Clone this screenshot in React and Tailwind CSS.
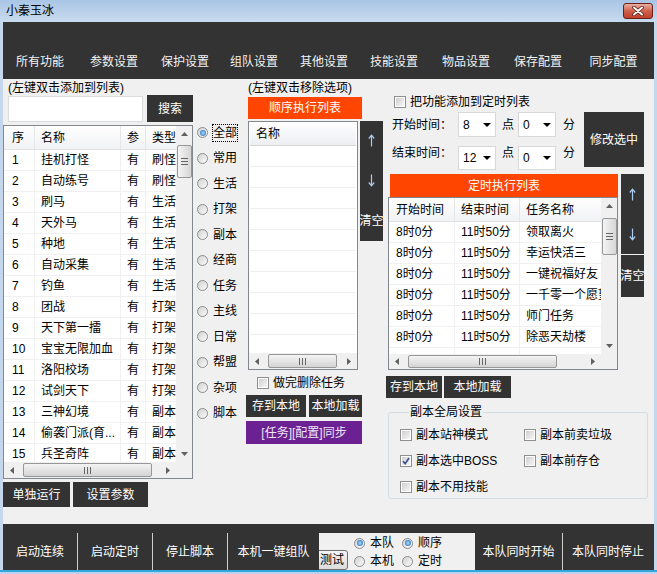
import React from 'react'

const funcs = [
  ['1', '挂机打怪', '刷怪'],
  ['2', '自动练号', '刷怪'],
  ['3', '刷马', '生活'],
  ['4', '天外马', '生活'],
  ['5', '种地', '生活'],
  ['6', '自动采集', '生活'],
  ['7', '钓鱼', '生活'],
  ['8', '团战', '打架'],
  ['9', '天下第一擂', '打架'],
  ['10', '宝宝无限加血', '打架'],
  ['11', '洛阳校场', '打架'],
  ['12', '试剑天下', '打架'],
  ['13', '三神幻境', '副本'],
  ['14', '偷袭门派(育...', '副本'],
  ['15', '兵圣奇阵', '副本'],
]

const timed = ['领取离火', '幸运快活三', '一键祝福好友', '一千零一个愿望', '师门任务', '除恶天劫楼', '']

const menus = [
  ['所有功能', 'w-[74px]'],
  ['参数设置', 'w-[74px]'],
  ['保护设置', 'w-[68px]'],
  ['组队设置', 'w-[70px]'],
  ['其他设置', 'w-[70px]'],
  ['技能设置', 'w-[70px]'],
  ['物品设置', 'w-[74px]'],
  ['保存配置', 'w-[70px]'],
  ['同步配置', 'w-[81px]'],
]

const kinds = ['全部', '常用', '生活', '打架', '副本', '经商', '任务', '主线', '日常', '帮盟', '杂项', '脚本']

function Tri({ dir }) {
  if (dir === 'up') return <svg width="7" height="4" viewBox="0 0 7 4"><polygon points="0,4 3.5,0 7,4" fill="currentColor" /></svg>
  if (dir === 'down') return <svg width="7" height="4" viewBox="0 0 7 4"><polygon points="0,0 7,0 3.5,4" fill="currentColor" /></svg>
  if (dir === 'left') return <svg width="4" height="7" viewBox="0 0 4 7"><polygon points="4,0 4,7 0,3.5" fill="currentColor" /></svg>
  return <svg width="4" height="7" viewBox="0 0 4 7"><polygon points="0,0 4,3.5 0,7" fill="currentColor" /></svg>
}

function MoveArrow({ down }) {
  return (
    <svg width="7" height="13" viewBox="0 0 7 13" className={down ? 'rotate-180' : ''}>
      <path d="M3.5 1.5 V12.5 M0.8 4.5 L3.5 1.2 L6.2 4.5" fill="none" stroke="#a9cdf0" strokeWidth="1.2" />
    </svg>
  )
}

function VScroll({ thumb }) {
  return (
    <div className="w-[16px] flex flex-col bg-[#f0f0f0]">
      <div className="h-[16px] flex items-center justify-center text-[#606060]"><Tri dir="up" /></div>
      <div className={`mx-auto w-[15px] ${thumb} rounded-[2px] border border-[#979797] bg-linear-to-r from-[#f4f4f4] to-[#d6d6d6] flex flex-col items-center justify-center gap-[2px]`}>
        <span className="w-[7px] h-px bg-[#666]" />
        <span className="w-[7px] h-px bg-[#666]" />
        <span className="w-[7px] h-px bg-[#666]" />
      </div>
      <div className="flex-1" />
      <div className="h-[16px] flex items-center justify-center text-[#606060]"><Tri dir="down" /></div>
    </div>
  )
}

function HScroll({ thumb, className }) {
  return (
    <div className={`flex bg-[#f0f0f0] ${className}`}>
      <div className="w-[16px] flex items-center justify-center text-[#606060]"><Tri dir="left" /></div>
      <div className={`ml-[3px] ${thumb} my-px rounded-[2px] border border-[#979797] bg-linear-to-b from-[#f4f4f4] to-[#d4d4d4] flex items-center justify-center gap-[2px]`}>
        <span className="w-px h-[7px] bg-[#666]" />
        <span className="w-px h-[7px] bg-[#666]" />
        <span className="w-px h-[7px] bg-[#666]" />
      </div>
      <div className="flex-1" />
      <div className="w-[16px] flex items-center justify-center text-[#606060]"><Tri dir="right" /></div>
    </div>
  )
}

function Radio({ checked, label, focus }) {
  return (
    <div className="flex items-center">
      <span className="w-[11px] h-[11px] rounded-full border border-[#8c8c8c] bg-linear-to-br from-[#d2d2d2] to-[#fbfbfb] flex items-center justify-center shrink-0">
        {checked && <span className="w-[6px] h-[6px] rounded-full bg-radial from-[#a6e0ff] to-[#0f5fae]" />}
      </span>
      {focus ? (
        <span className="ml-[5px] leading-[16px] outline-1 outline-dotted outline-black">{label}</span>
      ) : (
        <span className="ml-[5px]">{label}</span>
      )}
    </div>
  )
}

function Check({ checked, label, className }) {
  return (
    <div className={`flex items-center ${className}`}>
      <span className="w-[12px] h-[12px] border border-[#8e8f8f] bg-white p-[1px] flex shrink-0">
        <span className="flex-1 bg-linear-to-br from-[#d0d0d0] to-[#f6f6f6] flex items-center justify-center">
          {checked && (
            <svg width="8" height="8" viewBox="0 0 8 8">
              <path d="M1 4.2 L3.2 6.6 L7 1" fill="none" stroke="#3b4f91" strokeWidth="1.6" />
            </svg>
          )}
        </span>
      </span>
      <span className="ml-[4px]">{label}</span>
    </div>
  )
}

function Drop({ value }) {
  return (
    <div className="w-[38px] h-full bg-white border border-[#d8d8d8] flex items-center pl-[4px] pr-[4px]">
      <span className="flex-1">{value}</span>
      <svg width="8" height="4" viewBox="0 0 8 4"><polygon points="0,0 8,0 4,4" fill="#000" /></svg>
    </div>
  )
}

function Dark({ className, children }) {
  return <div className={`bg-[#333333] text-white flex items-center justify-center ${className}`}>{children}</div>
}

export default function App() {
  return (
    <div className="w-[657px] h-[574px] flex flex-col overflow-hidden bg-[#c4d7ec] text-black text-[12px] leading-[14px] font-['Liberation_Sans','Noto_Sans_CJK_SC',sans-serif]">
      {/* title bar */}
      <div className="h-[22px] flex items-center justify-between bg-linear-to-b from-[#a9c5e5] to-[#c8dbef]">
        <span className="ml-[6px]">小秦玉冰</span>
        <div className="mr-[4px] w-[30px] h-[16px] rounded-[3px] border border-[#6b2118] bg-linear-to-b from-[#eab0a3] via-[#d0604a] to-[#c0402b] flex items-center justify-center">
          <svg width="12" height="10" viewBox="0 0 12 10">
            <path d="M2 1.5 L10 8.5 M10 1.5 L2 8.5" stroke="#5a1b12" strokeWidth="3.6" strokeLinecap="round" />
            <path d="M2 1.5 L10 8.5 M10 1.5 L2 8.5" stroke="#fff" strokeWidth="2" strokeLinecap="round" />
          </svg>
        </div>
      </div>

      <div className="flex-1 flex flex-col px-[3px]">
        {/* menu */}
        <div className="h-[57px] bg-[#333333] flex items-end pb-[9px]">
          {menus.map(([m, w]) => (
            <div key={m} className={`${w} text-center leading-[16px] text-[#f2f2f2]`}>{m}</div>
          ))}
        </div>

        {/* content */}
        <div className="h-[445px] bg-[#f0f0f0] flex items-start">
          {/* column A */}
          <div className="w-[190px] flex flex-col">
            <div className="mt-[2px] h-[14px] pl-[5px]">(左键双击添加到列表)</div>
            <div className="h-[27px] flex items-start">
              <div className="ml-[5px] mt-px w-[135px] h-[26px] bg-white border border-[#dcdcdc]" />
              <Dark className="ml-[4px] w-[46px] h-[27px]">搜索</Dark>
            </div>
            <div className="mt-[3px] h-[354px] w-[190px] border border-[#828790] bg-white flex flex-col">
              <div className="flex h-[336px]">
                <div className="w-[172px] overflow-hidden flex flex-col">
                  <div className="h-[24px] shrink-0 flex bg-linear-to-b from-white to-[#f1f2f4] border-b border-[#e3e3e3]">
                    <div className="w-[31px] pl-[8px] flex items-center border-r border-[#e6e6e6]">序</div>
                    <div className="w-[86px] pl-[6px] flex items-center border-r border-[#e6e6e6]">名称</div>
                    <div className="w-[25px] pl-[6px] flex items-center border-r border-[#e6e6e6]">参</div>
                    <div className="w-[30px] pl-[6px] flex items-center whitespace-nowrap overflow-hidden">类型</div>
                  </div>
                  {funcs.map(([n, name, kind]) => (
                    <div key={n} className="h-[21px] shrink-0 flex border-b border-[#f0f0f0]">
                      <div className="w-[31px] pl-[8px] flex items-center border-r border-[#f0f0f0]">{n}</div>
                      <div className="w-[86px] pl-[6px] flex items-center border-r border-[#f0f0f0] whitespace-nowrap overflow-hidden">{name}</div>
                      <div className="w-[25px] pl-[6px] flex items-center border-r border-[#f0f0f0]">有</div>
                      <div className="w-[30px] pl-[6px] flex items-center whitespace-nowrap overflow-hidden">{kind}</div>
                    </div>
                  ))}
                </div>
                <VScroll thumb="mt-[3px] h-[33px]" />
              </div>
              <div className="flex h-[16px]">
                <HScroll className="w-[172px]" thumb="w-[129px]" />
                <div className="w-[16px] bg-[#f0f0f0]" />
              </div>
            </div>
            <div className="mt-[3px] h-[25px] flex">
              <Dark className="w-[67px]">单独运行</Dark>
              <Dark className="ml-[3px] w-[75px]">设置参数</Dark>
            </div>
          </div>

          {/* column B : radios */}
          <div className="ml-[4px] w-[49px] pt-[41px] flex flex-col">
            {kinds.map((k, i) => (
              <div key={k} className="h-[25.5px] flex items-center">
                <Radio label={k} checked={i === 0} focus={i === 0} />
              </div>
            ))}
          </div>

          {/* column C */}
          <div className="w-[137px] flex flex-col">
            <div className="mt-[2px] h-[14px] pl-[2px] whitespace-nowrap">(左键双击移除选项)</div>
            <div className="mt-[2px] ml-[2px] w-[114px] h-[22px] bg-[#ff4500] text-white flex items-center justify-center">顺序执行列表</div>
            <div className="mt-[2px] flex items-start">
              <div className="ml-[2px] w-[110px] h-[249px] border border-[#828790] bg-white flex flex-col">
                <div className="flex-1 overflow-hidden px-px flex flex-col">
                  <div className="h-[24px] shrink-0 pl-[6px] flex items-center bg-linear-to-b from-white to-[#eceef2] border-b border-[#d5d5d5]">名称</div>
                  {[0, 1, 2, 3, 4, 5, 6, 7, 8, 9].map((i) => (
                    <div key={i} className="h-[21px] shrink-0 border-b border-[#efefef]" />
                  ))}
                </div>
                <HScroll className="h-[16px]" thumb="w-[69px]" />
              </div>
              <div className="ml-[2px] w-[23px] h-[120px] bg-[#333333] text-white flex flex-col items-center justify-around">
                <MoveArrow />
                <MoveArrow down />
                <span className="whitespace-nowrap">清空</span>
              </div>
            </div>
            <Check className="mt-[6px] h-[14px] pl-[11px]" label="做完删除任务" />
            <div className="mt-[5px] h-[22px] flex">
              <Dark className="w-[60px]">存到本地</Dark>
              <Dark className="ml-[3px] w-[53px]">本地加载</Dark>
            </div>
            <div className="mt-[4px] w-[116px] h-[23px] bg-[#6b2192] text-[#f0e6f6] flex items-center justify-center">[任务][配置]同步</div>
          </div>

          {/* column D */}
          <div className="ml-[3px] w-[262px] flex flex-col">
            <Check className="mt-[16px] h-[14px] pl-[8px]" label="把功能添加到定时列表" />
            <div className="mt-[3px] flex items-start">
              <div className="flex flex-col">
                <div className="h-[25px] flex items-center">
                  <span className="ml-[6px] w-[60px]">开始时间：</span>
                  <div className="ml-[6px] h-full"><Drop value="8" /></div>
                  <span className="ml-[6px]">点</span>
                  <div className="ml-[4px] h-full"><Drop value="0" /></div>
                  <span className="ml-[7px]">分</span>
                </div>
                <div className="mt-[9px] h-[24px] flex items-start">
                  <span className="ml-[6px] w-[60px]">结束时间：</span>
                  <div className="ml-[6px] h-full"><Drop value="12" /></div>
                  <span className="ml-[6px]">点</span>
                  <div className="ml-[4px] h-full"><Drop value="0" /></div>
                  <span className="ml-[7px]">分</span>
                </div>
              </div>
              <Dark className="ml-[9px] w-[60px] h-[55px]">修改选中</Dark>
            </div>

            <div className="mt-[4px] flex items-start">
              <div className="w-[232px] flex flex-col">
                <div className="ml-[4px] w-[228px] h-[23px] bg-[#ff4500] text-white flex items-center justify-center">定时执行列表</div>
                <div className="ml-[2px] w-[230px] h-[173px] border border-[#828790] bg-white flex flex-col">
                  <div className="flex h-[156px]">
                    <div className="w-[212px] overflow-hidden flex flex-col">
                      <div className="h-[24px] shrink-0 flex bg-linear-to-b from-white to-[#f1f2f4] border-b border-[#e3e3e3]">
                        <div className="w-[66px] pl-[7px] flex items-center border-r border-[#e6e6e6]">开始时间</div>
                        <div className="w-[65px] pl-[6px] flex items-center border-r border-[#e6e6e6]">结束时间</div>
                        <div className="w-[81px] pl-[6px] flex items-center">任务名称</div>
                      </div>
                      {timed.map((t, i) => (
                        <div key={i} className="h-[21px] shrink-0 flex border-b border-[#f0f0f0]">
                          <div className="w-[66px] pl-[7px] flex items-center border-r border-[#f0f0f0]">{t ? '8时0分' : ''}</div>
                          <div className="w-[65px] pl-[6px] flex items-center border-r border-[#f0f0f0]">{t ? '11时50分' : ''}</div>
                          <div className="w-[81px] pl-[6px] flex items-center whitespace-nowrap overflow-hidden">{t}</div>
                        </div>
                      ))}
                    </div>
                    <VScroll thumb="mt-[4px] h-[37px]" />
                  </div>
                  <div className="flex h-[15px]">
                    <HScroll className="w-[212px]" thumb="w-[149px]" />
                    <div className="w-[16px] bg-[#f0f0f0]" />
                  </div>
                </div>
              </div>
              <div className="ml-[3px] w-[23px] flex flex-col">
                <div className="h-[80px] bg-[#333333] flex flex-col items-center justify-around">
                  <MoveArrow />
                  <MoveArrow down />
                </div>
                <Dark className="mt-px h-[42px] whitespace-nowrap">清空</Dark>
              </div>
            </div>

            <div className="mt-[6px] h-[22px] flex">
              <Dark className="w-[56px]">存到本地</Dark>
              <Dark className="ml-[2px] w-[67px]">本地加载</Dark>
            </div>

            <fieldset className="mt-[7px] ml-[2px] w-[260px] border border-[#d3dce3] rounded-[3px] pl-[11px] pt-[9px] pb-[4px]">
              <legend className="ml-[9px] px-px">副本全局设置</legend>
              <div className="grid grid-cols-[124px_1fr] gap-y-[12px]">
                <Check className="h-[14px]" label="副本站神模式" />
                <Check className="h-[14px]" label="副本前卖垃圾" />
                <Check className="h-[14px]" label="副本选中BOSS" checked />
                <Check className="h-[14px]" label="副本前存仓" />
                <Check className="h-[14px]" label="副本不用技能" />
              </div>
            </fieldset>
          </div>
        </div>

        {/* bottom bar */}
        <div className="h-[46px] bg-[#333333] pt-[9px] flex text-white">
          <div className="w-[74px] flex items-center justify-center">启动连续</div>
          <div className="w-px bg-[#d0d0d0]" />
          <div className="w-[74px] flex items-center justify-center">启动定时</div>
          <div className="w-px bg-[#d0d0d0]" />
          <div className="w-[74px] flex items-center justify-center">停止脚本</div>
          <div className="w-px bg-[#d0d0d0]" />
          <div className="w-[91px] flex items-center justify-center">本机一键组队</div>
          <div className="w-[156px] bg-[#f0f0f0] text-black flex overflow-hidden">
            <div className="self-end -ml-[3px] w-[32px] h-[20px] shrink-0 border border-[#707070] rounded-[3px] bg-linear-to-b from-[#f4f4f4] to-[#dcdcdc] flex items-center justify-center">测试</div>
            <div className="ml-[6px] pt-px flex flex-col">
              <div className="h-[19px] flex items-center">
                <div className="w-[48px]"><Radio label="本队" checked /></div>
                <Radio label="顺序" checked />
              </div>
              <div className="h-[19px] flex items-center">
                <div className="w-[48px]"><Radio label="本机" /></div>
                <Radio label="定时" />
              </div>
            </div>
          </div>
          <div className="w-[87px] flex items-center justify-center">本队同时开始</div>
          <div className="w-px bg-[#d0d0d0]" />
          <div className="w-[90px] flex items-center justify-center">本队同时停止</div>
        </div>
      </div>
      <div className="h-[4px] border-t-2 border-[#35a6dc] bg-[#b9d3ee]" />
    </div>
  )
}
